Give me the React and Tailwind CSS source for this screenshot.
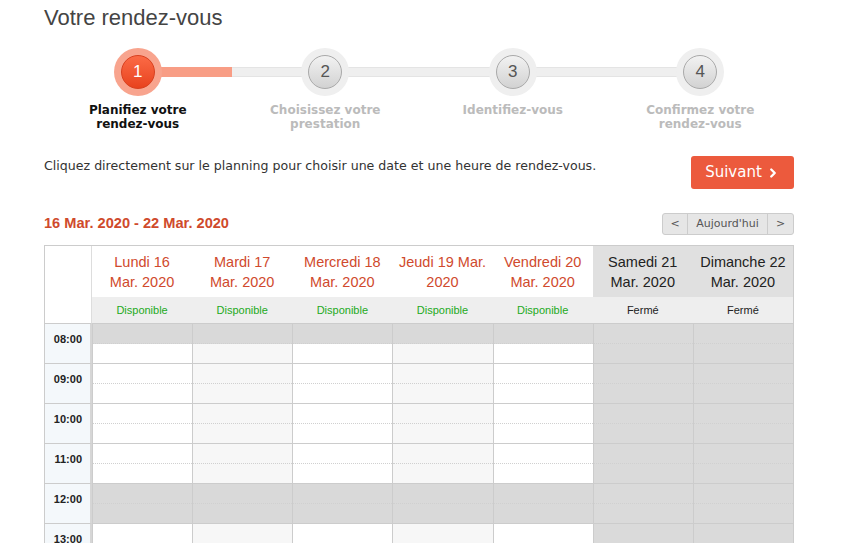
import { ChevronRight } from "lucide-react";

const steps = [
  { n: 1, label: ["Planifiez votre", "rendez-vous"], active: true },
  { n: 2, label: ["Choisissez votre", "prestation"] },
  { n: 3, label: ["Identifiez-vous"] },
  { n: 4, label: ["Confirmez votre", "rendez-vous"] },
];

const days = [
  { l1: "Lundi 16", l2: "Mar. 2020", open: true },
  { l1: "Mardi 17", l2: "Mar. 2020", open: true, alt: true },
  { l1: "Mercredi 18", l2: "Mar. 2020", open: true },
  { l1: "Jeudi 19 Mar.", l2: "2020", open: true, alt: true },
  { l1: "Vendredi 20", l2: "Mar. 2020", open: true },
  { l1: "Samedi 21", l2: "Mar. 2020" },
  { l1: "Dimanche 22", l2: "Mar. 2020" },
];

const hours = ["08:00", "09:00", "10:00", "11:00", "12:00", "13:00", "14:00", "15:00"];

// demi-heures fermées pour les jours ouverts
const closed = (h, half) => (h === "08:00" && half === 0) || h === "12:00";

const Step = ({ step }) => (
  <div className="flex flex-col items-center">
    <div
      className={`w-[48px] h-[48px] rounded-full flex items-center justify-center ${
        step.active ? "bg-[#f8a48e]" : "bg-[#efefef]"
      }`}
    >
      <div
        className={`w-[34px] h-[34px] rounded-full flex items-center justify-center text-[17px] ${
          step.active
            ? "bg-gradient-to-b from-[#fb6a45] to-[#e8421d] border border-[#d8401f] text-white"
            : "bg-gradient-to-b from-[#f2f2f2] to-[#d2d2d2] border border-[#a9a9a9] text-[#555]"
        }`}
        style={{ fontFamily: "'Liberation Sans', Arial, sans-serif" }}
      >
        {step.n}
      </div>
    </div>
    <div
      className={`mt-[7px] text-center text-[12px] leading-[14px] font-bold ${
        step.active ? "text-[#111]" : "text-[#bbb]"
      }`}
      style={{ fontFamily: "'DejaVu Sans', Verdana, sans-serif" }}
    >
      {step.label.map((t) => (
        <div key={t}>{t}</div>
      ))}
    </div>
  </div>
);

export default function App() {
  return (
    <div
      className="w-[842px] min-h-[543px] bg-white text-[#333]"
      style={{ fontFamily: "'Liberation Sans', Arial, sans-serif" }}
    >
      <div className="ml-[44px] w-[750px]">
        <h1 className="pt-[5px] text-[22px] leading-[26px] text-[#444]">Votre rendez-vous</h1>

        {/* étapes */}
        <div className="relative mt-[17px]">
          <div className="absolute left-[94px] right-[94px] top-[19px] h-[10px] bg-[#efefef] border-y border-[#e4e4e4]" />
          <div className="absolute left-[94px] w-[94px] top-[19px] h-[10px] bg-[#f89d85]" />
          <div className="relative grid grid-cols-4">
            {steps.map((s) => (
              <Step key={s.n} step={s} />
            ))}
          </div>
        </div>

        {/* intro + bouton */}
        <div className="mt-[25px] flex items-start justify-between">
          <p
            className="pt-[3px] text-[12.6px] leading-[14px] text-[#333]"
            style={{ fontFamily: "'DejaVu Sans', Verdana, sans-serif" }}
          >
            Cliquez directement sur le planning pour choisir une date et une heure de rendez-vous.
          </p>
          <button
            className="w-[103px] h-[33px] rounded-[3px] bg-[#ec5a3d] text-white text-[15px] flex items-center justify-center gap-[4px]"
            style={{ fontFamily: "'DejaVu Sans', Verdana, sans-serif" }}
          >
            Suivant
            <ChevronRight size={14} strokeWidth={4} />
          </button>
        </div>

        {/* période + navigation */}
        <div className="mt-[24px] flex items-center justify-between">
          <div className="text-[14.6px] font-bold text-[#cf4a2c]">16 Mar. 2020 - 22 Mar. 2020</div>
          <div
            className="flex h-[22px] text-[11px] text-[#555] border border-[#ccc] rounded-[3px] bg-[#e6e6e6] overflow-hidden"
            style={{ fontFamily: "'DejaVu Sans', Verdana, sans-serif" }}
          >
            <button className="w-[24px] flex items-center justify-center">&lt;</button>
            <button className="w-[81px] flex items-center justify-center border-x border-[#ccc]">
              Aujourd'hui
            </button>
            <button className="w-[25px] flex items-center justify-center">&gt;</button>
          </div>
        </div>

        {/* planning */}
        <div className="mt-[10px] border border-[#ccc] grid grid-cols-[47px_repeat(7,1fr)]">
          <div className="border-r border-[#ddd]" />
          {days.map((d) => (
            <div
              key={d.l1}
              className={`h-[51px] pt-[6px] text-center text-[14.5px] leading-[20px] ${
                d.open ? "text-[#d04a2d]" : "bg-[#e0e0e0] text-[#222]"
              }`}
            >
              <div>{d.l1}</div>
              <div>{d.l2}</div>
            </div>
          ))}

          <div className="border-r border-[#ddd] border-b border-b-[#ccc]" />
          {days.map((d) => (
            <div
              key={d.l1 + "s"}
              className={`h-[27px] flex items-center justify-center bg-[#eeeeee] text-[11px] border-b border-[#ccc] ${
                d.open ? "text-[#22aa22]" : "text-[#222]"
              }`}
            >
              {d.open ? "Disponible" : "Fermé"}
            </div>
          ))}

          {hours.map((h) => (
            <div key={h} className="contents">
              <div className="h-[40px] bg-[#f4f8fb] border-r-2 border-[#d6d6d6] border-b border-b-[#ccc] text-right pr-[8px] pt-[7px] text-[11px] font-bold text-[#222]">
                {h}
              </div>
              {days.map((d) => (
                <div key={d.l1 + h} className="h-[40px] border-l border-[#ccc] border-b border-b-[#ccc] flex flex-col">
                  {[0, 1].map((half) => {
                    const gray = !d.open || closed(h, half);
                    return (
                      <div
                        key={half}
                        className={`flex-1 ${half === 0 ? "border-b border-dotted border-[#d0d0d0]" : ""} ${
                          gray ? (d.open ? "bg-[#d9d9d9]" : "bg-[#dadada]") : d.alt ? "bg-[#f7f7f7]" : "bg-white"
                        }`}
                      />
                    );
                  })}
                </div>
              ))}
            </div>
          ))}
        </div>
      </div>
    </div>
  );
}
